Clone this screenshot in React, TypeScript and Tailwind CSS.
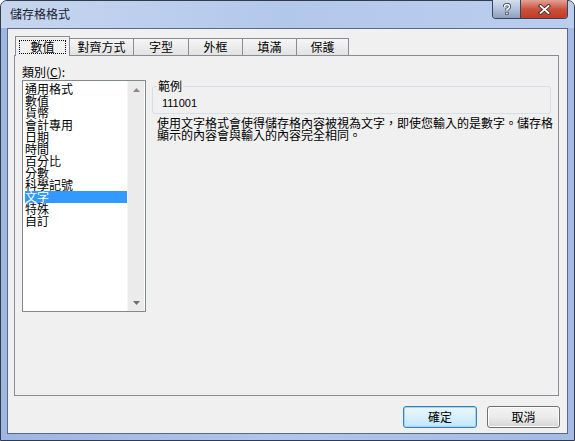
import React from 'react';

const font = "font-['Noto_Sans_CJK_TC','Noto_Sans',sans-serif]";

// 분류 목록
const categories = [
  '通用格式',
  '數值',
  '貨幣',
  '會計專用',
  '日期',
  '時間',
  '百分比',
  '分數',
  '科學記號',
  '文字',
  '特殊',
  '自訂',
];

const tabs = [
  { label: '對齊方式', w: 'w-[65px]' },
  { label: '字型', w: 'w-[56px]' },
  { label: '外框', w: 'w-[55px]' },
  { label: '填滿', w: 'w-[55px]' },
  { label: '保護', w: 'w-[53px]' },
];

const TitleButtons = () => (
  <div className="flex -mt-px h-[19px] rounded-b-[4px] overflow-hidden border border-t-0 border-[#37455c]">
    <div className="w-[28px] flex items-center justify-center bg-gradient-to-b from-[#d5deec] via-[#b3c2da] to-[#8d9fbd] border-r border-[#37455c]">
      <svg width="10" height="12" viewBox="0 0 10 12">
        <path d="M2.5 4 Q2.5 1.5 5 1.5 Q7.5 1.5 7.5 3.8 Q7.5 5.3 5 6.3 L5 7.8" fill="none" stroke="#3d4a5e" strokeWidth="3.2" />
        <rect x="3.3" y="8.8" width="3.4" height="3" fill="#3d4a5e" />
        <path d="M2.5 4 Q2.5 1.5 5 1.5 Q7.5 1.5 7.5 3.8 Q7.5 5.3 5 6.3 L5 7.8" fill="none" stroke="#ffffff" strokeWidth="1.5" />
        <rect x="4.2" y="9.6" width="1.6" height="1.5" fill="#ffffff" />
      </svg>
    </div>
    <div className="w-[46px] flex items-center justify-center bg-gradient-to-b from-[#e3a197] via-[#c9523e] to-[#c23a26]">
      <svg width="13" height="11" viewBox="0 0 13 11">
        <path d="M2.5 2 L10.5 9 M10.5 2 L2.5 9" stroke="#4a2a26" strokeWidth="3.6" strokeLinecap="square" />
        <path d="M2.5 2 L10.5 9 M10.5 2 L2.5 9" stroke="#ffffff" strokeWidth="1.8" strokeLinecap="square" />
      </svg>
    </div>
  </div>
);

const App = () => {
  return (
    <div className={`w-[575px] h-[441px] bg-white text-[12px] leading-[12px] text-black ${font}`}>
      <div className="w-[575px] h-[441px] flex flex-col rounded-t-[7px] border border-[#323b49] px-[6px] pb-[6px] bg-gradient-to-r from-[#9fb6e2] via-[#afc5ea] to-[#a3bbe5]">
        {/* 제목 표시줄 */}
        <div className="h-[27px] flex justify-between bg-gradient-to-r from-[#c6d6ef] via-[#b2c8eb] to-[#bacdee] -mx-[6px] px-[6px] rounded-t-[6px]">
          <div className="pl-[3px] pt-[7px] text-[#1b2130]">儲存格格式</div>
          <TitleButtons />
        </div>

        {/* 클라이언트 영역 */}
        <div className="flex-1 flex flex-col border border-[#5a6a86] bg-[#f0f0f0]">
          {/* 탭 */}
          <div className="mt-[7px] ml-[7px] h-[19px] flex items-end">
            <div className="relative z-10 -mb-px w-[55px] h-[20px] border border-b-0 border-[#898c95] bg-[#f0f0f0] flex items-start justify-center pt-[3px]">
              <div className="w-[47px] h-[14px] border border-dotted border-black flex items-center justify-center">
                數值
              </div>
            </div>
            {tabs.map((t) => (
              <div
                key={t.label}
                className={`${t.w} -ml-px h-[17px] border border-b-0 border-[#898c95] bg-gradient-to-b from-[#f6f6f6] to-[#e2e2e2] flex items-center justify-center`}
              >
                {t.label}
              </div>
            ))}
          </div>

          {/* 탭 패널 */}
          <div className="ml-[6px] w-[545px] h-[341px] border border-[#898c95] bg-[#f0f0f0] flex pl-[7px] pr-[7px]">
            <div className="pt-[10px]">
              <div>
                類別(<span className="underline underline-offset-1">C</span>):
              </div>
              <div className="mt-[2px] w-[124px] h-[232px] border border-[#828790] bg-white flex">
                <div className="pl-[2px] pt-[2px] w-[104px]">
                  {categories.map((c) => (
                    <div
                      key={c}
                      className={`h-[12px] w-[102px] whitespace-nowrap ${c === '文字' ? 'bg-[#3399ff] text-white' : ''}`}
                    >
                      {c}
                    </div>
                  ))}
                </div>
                <div className="w-[17px] bg-[#ebebeb] border-l border-[#f5f5f5] flex flex-col justify-between">
                  <div className="h-[17px] flex items-center justify-center">
                    <svg width="7" height="4" viewBox="0 0 7 4">
                      <path d="M3.5 0 L7 4 L0 4 Z" fill="#8a8a8a" />
                    </svg>
                  </div>
                  <div className="h-[17px] flex items-center justify-center">
                    <svg width="7" height="4" viewBox="0 0 7 4">
                      <path d="M0 0 L7 0 L3.5 4 Z" fill="#6e6e6e" />
                    </svg>
                  </div>
                </div>
              </div>
            </div>

            <div className="ml-[6px] pt-[30px]">
              <div className="relative w-[399px] h-[28px] border border-[#d5dfe5] rounded-[3px] pl-[9px] pt-[10px]">
                <span className="absolute -top-[7px] left-[4px] px-[1px] bg-[#f0f0f0]">範例</span>
                <div className="font-['Liberation_Sans',sans-serif] text-[11px] leading-[12px]">111001</div>
              </div>
              <div className="mt-[3px] ml-[5px] whitespace-nowrap">
                使用文字格式會使得儲存格內容被視為文字，即使您輸入的是數字。儲存格
                <br />
                顯示的內容會與輸入的內容完全相同。
              </div>
            </div>
          </div>

          {/* 버튼 */}
          <div className="mt-[10px] flex justify-end gap-[10px] pr-[7px]">
            <button className="w-[74px] h-[22px] rounded-[3px] border border-[#3c7fb1] bg-gradient-to-b from-[#eaf6fd] via-[#d9f0fc] to-[#bee6fd] shadow-[inset_0_0_0_1px_#9fd5f3]">
              確定
            </button>
            <button className="w-[73px] h-[22px] rounded-[3px] border border-[#707070] bg-gradient-to-b from-[#f2f2f2] via-[#ebebeb] to-[#d6d6d6] shadow-[inset_0_0_0_1px_#fcfcfc]">
              取消
            </button>
          </div>
        </div>
      </div>
    </div>
  );
};

export default App;
